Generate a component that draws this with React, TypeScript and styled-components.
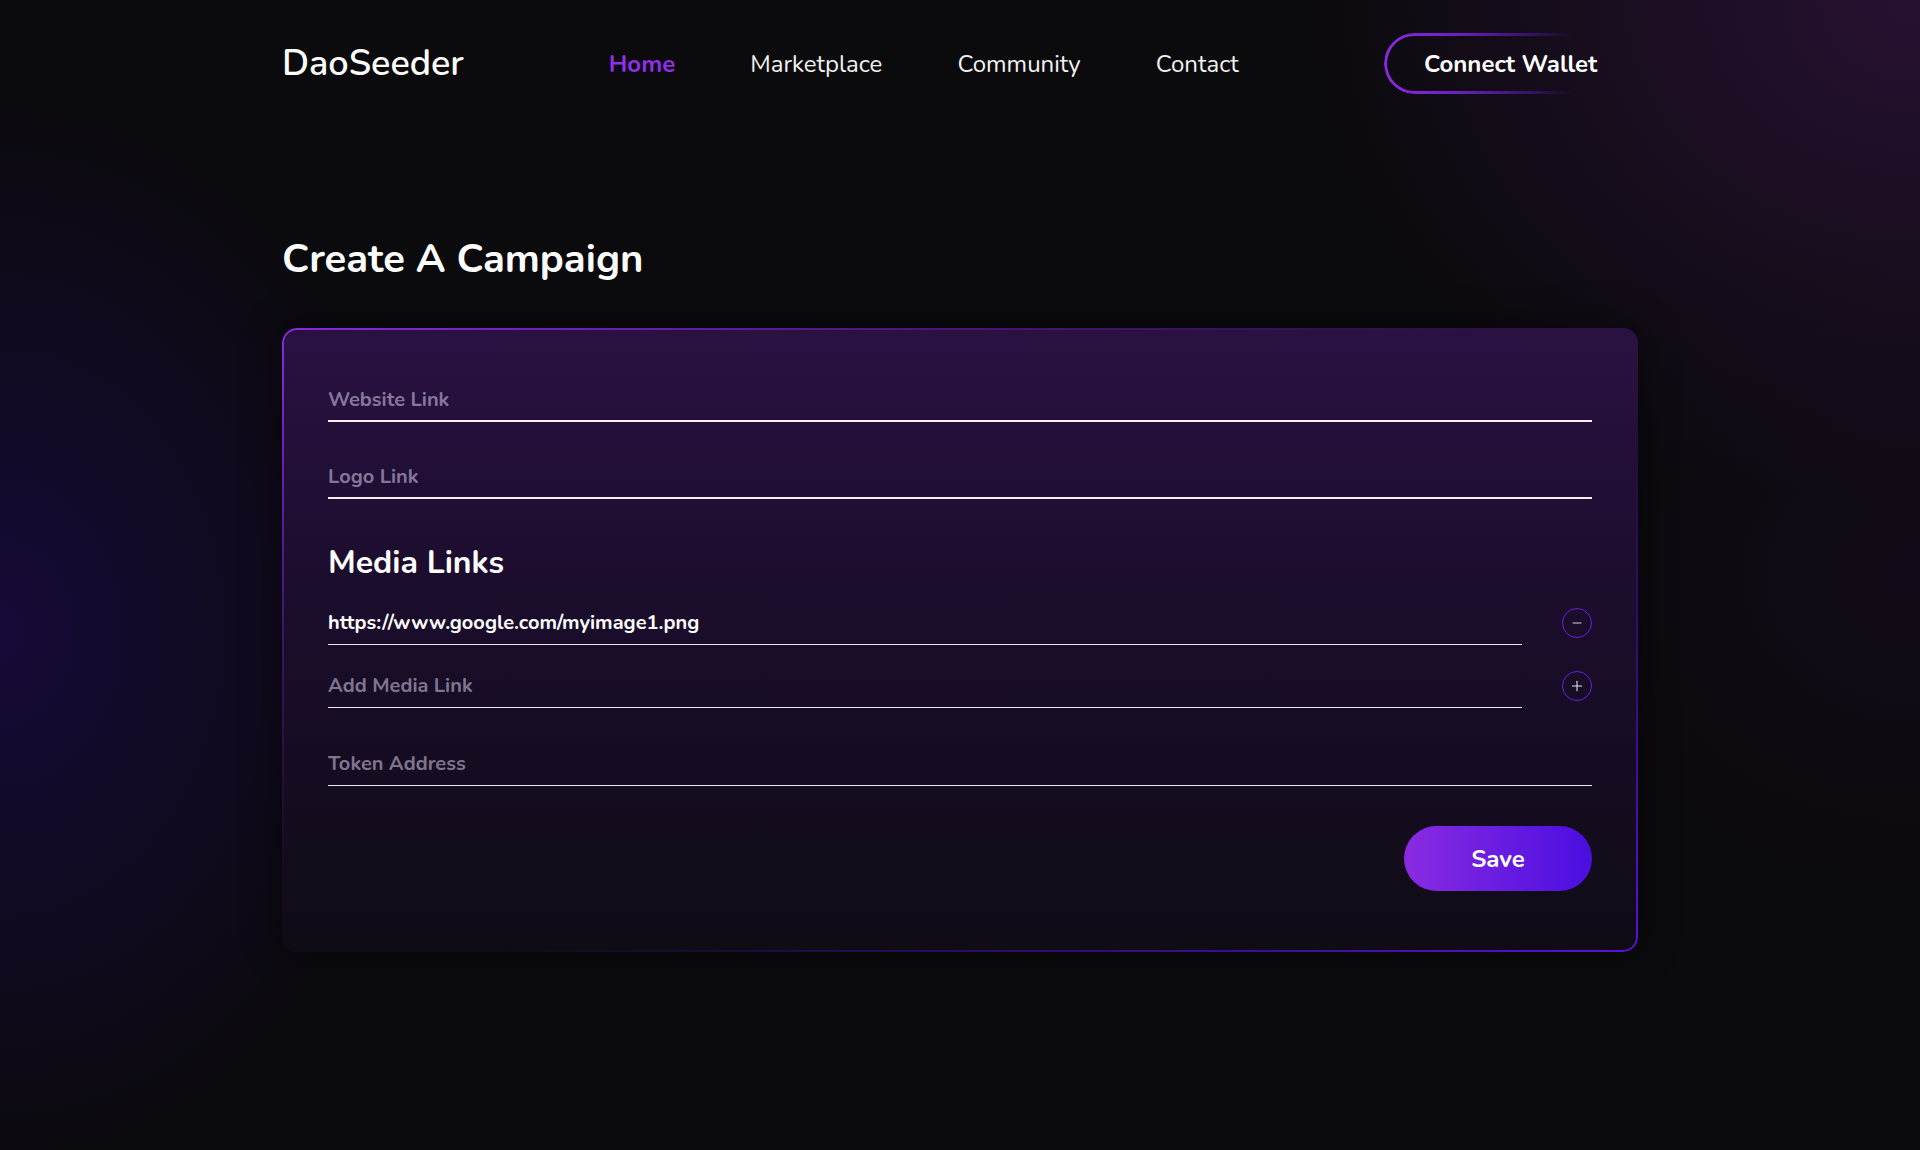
import React from "react"
import styled, { createGlobalStyle } from "styled-components"
import { Minus, Plus } from "lucide-react"

const GlobalStyle = createGlobalStyle`
  * { box-sizing: border-box; }
  html, body { margin: 0; padding: 0; }
  body {
    background: #0b0a0d;
    font-family: "Nunito", "Lato", "Noto Sans", sans-serif;
    color: #fff;
  }
`

const Page = styled.div`
  min-height: 1150px;
  background:
    radial-gradient(ellipse 26% 55% at 0% 55%, rgba(30, 10, 82, 0.62), transparent 85%),
    radial-gradient(ellipse 40% 55% at 100% 0%, rgba(44, 18, 56, 0.85), transparent 80%),
    radial-gradient(ellipse 25% 35% at 100% 50%, rgba(26, 12, 34, 0.5), transparent 80%),
    #0b0a0d;
`

const Container = styled.div`
  width: 1356px;
  margin: 0 auto;
`

const Header = styled.header`
  display: flex;
  align-items: center;
  justify-content: space-between;
  padding-top: 33px;
  height: 94px;
`

const Logo = styled.div`
  font-size: 36px;
  font-weight: 600;
`

const Nav = styled.nav`
  display: flex;
  gap: 75px;
  margin-left: 145px;
  margin-right: auto;
`

const NavLink = styled.a<{ $active?: boolean }>`
  font-size: 24px;
  font-weight: ${(p) => (p.$active ? 700 : 400)};
  color: ${(p) => (p.$active ? "#8f2fe6" : "#f2f2f2")};
  text-decoration: none;
  cursor: pointer;
`

const WalletButton = styled.button`
  position: relative;
  height: 61px;
  width: 254px;
  padding: 0 0 0 40px;
  text-align: left;
  border: none;
  border-radius: 31px;
  background: transparent;
  color: #fff;
  font-family: inherit;
  font-size: 24px;
  font-weight: 700;
  cursor: pointer;

  &::before {
    content: "";
    position: absolute;
    inset: 0;
    border-radius: inherit;
    padding: 3px;
    background: linear-gradient(90deg, #8a2be2 0%, #6a1fc0 30%, #3a1470 55%, transparent 75%);
    -webkit-mask: linear-gradient(#000 0 0) content-box, linear-gradient(#000 0 0);
    -webkit-mask-composite: xor;
    mask-composite: exclude;
    pointer-events: none;
  }
`

const Title = styled.h1`
  margin: 141px 0 45px;
  font-size: 40px;
  line-height: 48px;
  font-weight: 700;
`

const Card = styled.div`
  position: relative;
  border-radius: 15px;
  padding: 50px 46px 61px;
  background: linear-gradient(180deg, #2a1142 0%, #1c0d2e 40%, #0f0c15 100%);
  box-shadow: 0 0 40px rgba(0, 0, 0, 0.45);

  &::before {
    content: "";
    position: absolute;
    inset: 0;
    border-radius: inherit;
    padding: 2px;
    background: linear-gradient(to bottom right, #8a2be2 0%, rgba(110, 30, 200, 0.4) 25%, transparent 45%, transparent 58%, rgba(80, 16, 220, 0.5) 80%, #5a12e0 100%);
    -webkit-mask: linear-gradient(#000 0 0) content-box, linear-gradient(#000 0 0);
    -webkit-mask-composite: xor;
    mask-composite: exclude;
    pointer-events: none;
  }
`

const Field = styled.input<{ $thin?: boolean }>`
  display: block;
  width: 100%;
  height: 44px;
  padding: 0;
  background: transparent;
  border: none;
  border-bottom: ${(p) => (p.$thin ? "1.5px solid rgba(255,255,255,0.9)" : "2px solid #f4f0f8")};
  outline: none;
  color: #fff;
  font-family: inherit;
  font-size: 20px;
  font-weight: 700;

  &::placeholder {
    color: rgba(220, 210, 235, 0.55);
  }
`

const FieldGap = styled.div<{ $h: number }>`
  height: ${(p) => p.$h}px;
`

const SectionTitle = styled.h2`
  margin: 44px 0 18px;
  font-size: 32px;
  line-height: 40px;
  font-weight: 700;
`

const MediaRow = styled.div`
  display: flex;
  align-items: center;
  gap: 40px;
`

const IconButton = styled.button`
  flex: none;
  width: 30px;
  height: 30px;
  border-radius: 50%;
  border: 1.5px solid #6a1ee6;
  background: transparent;
  color: #e6e2ec;
  display: flex;
  align-items: center;
  justify-content: center;
  padding: 0;
  cursor: pointer;
`

const Actions = styled.div`
  display: flex;
  justify-content: flex-end;
  margin-top: 40px;
`

const SaveButton = styled.button`
  width: 188px;
  height: 65px;
  border: none;
  border-radius: 33px;
  background: linear-gradient(90deg, #8a2be2 0%, #4a0ee0 100%);
  color: #fff;
  font-family: inherit;
  font-size: 24px;
  font-weight: 700;
  cursor: pointer;
`

export default function App() {
  return (
    <>
      <GlobalStyle />
      <Page>
        <Container>
          <Header>
            <Logo>DaoSeeder</Logo>
            <Nav>
              <NavLink $active>Home</NavLink>
              <NavLink>Marketplace</NavLink>
              <NavLink>Community</NavLink>
              <NavLink>Contact</NavLink>
            </Nav>
            <WalletButton>Connect Wallet</WalletButton>
          </Header>

          <Title>Create A Campaign</Title>

          <Card>
            <Field placeholder="Website Link" />
            <FieldGap $h={33} />
            <Field placeholder="Logo Link" />

            <SectionTitle>Media Links</SectionTitle>
            <MediaRow>
              <Field $thin readOnly defaultValue="https://www.google.com/myimage1.png" />
              <IconButton aria-label="remove">
                <Minus size={14} strokeWidth={1.6} />
              </IconButton>
            </MediaRow>
            <FieldGap $h={19} />
            <MediaRow>
              <Field $thin placeholder="Add Media Link" />
              <IconButton aria-label="add">
                <Plus size={16} strokeWidth={1.6} />
              </IconButton>
            </MediaRow>
            <FieldGap $h={34} />
            <Field $thin placeholder="Token Address" />

            <Actions>
              <SaveButton>Save</SaveButton>
            </Actions>
          </Card>
        </Container>
      </Page>
    </>
  )
}
